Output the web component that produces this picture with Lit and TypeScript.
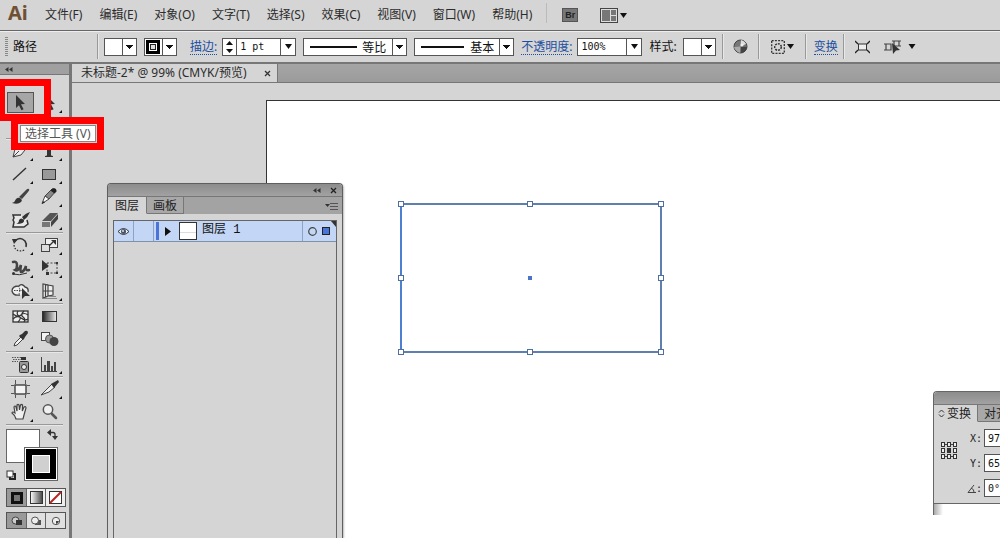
import { LitElement, html, svg, css, nothing } from "lit";
import { customElement, property } from "lit/decorators.js";

type Tool = { name: string; art: unknown; fly?: boolean; active?: boolean };

const MENUS = ["文件(F)", "编辑(E)", "对象(O)", "文字(T)", "选择(S)", "效果(C)", "视图(V)", "窗口(W)", "帮助(H)"];

const GROUPS: Tool[][] = [
  [
    { name: "选择工具", active: true, art: svg`<path fill="#333" d="M10 3l9 9-4 .3 2.600 5-2.200 1-2.400-5L10 16z"/>` },
    { name: "直接选择工具", fly: true, art: svg`<path fill="#333" d="M11 3l9 9-4 .3 2.600 5-2.200 1-2.400-5L11 16z"/>` },
    { name: "魔棒工具", art: svg`<path stroke="#333" stroke-width="2" d="M8 18l8-8"/><path stroke="#444" d="M18 3v4M16 5h4"/>` },
    { name: "套索工具", fly: true, art: svg`<path stroke="#333" stroke-width="1.500" fill="none" stroke-dasharray="2 1" d="M10 14q-3-9 5-9 8 1 5 6-4 4-9 1"/>` },
  ],
  [
    { name: "钢笔工具", fly: true, art: svg`<path fill="#ececec" stroke="#444" d="M7 17l2-8 5-4 5 5-4 5z"/><path stroke="#444" d="M7 17l6-6"/><path fill="#333" d="M15 3l5 5-2 2-5-5z"/>` },
    { name: "文字工具", fly: true, art: svg`<path fill="#333" d="M8 4h12v4h-1q0-2-3-2v9q0 1 2 1v1h-8v-1q2 0 2-1V6q-3 0-3 2H8z"/>` },
    { name: "直线段工具", fly: true, art: svg`<path stroke="#333" stroke-width="1.400" d="M7 17L20 5"/>` },
    { name: "矩形工具", fly: true, art: svg`<rect x="7.500" y="6.500" width="13" height="10" fill="#999" stroke="#333"/>` },
    { name: "画笔工具", art: svg`<path fill="#444" d="M23 3q1 1-1 3l-6 7-3-2 7-7q2-2 3-1z"/><path fill="#333" d="M6 17q3-1 4-4 2-2 4-1 3 2 1 4-3 3-9 1z"/>` },
    { name: "铅笔工具", fly: true, art: svg`<path fill="#888" stroke="#444" d="M10 10l7-7q3-1 4 2l-7 8z"/><path fill="#fff" stroke="#444" d="M10 10l4 3-7 4.500z"/><path fill="#222" d="M15.500 4.500l2-2q4-1 4 3l-2 2zM7 18l1-3 2 1.500z"/>` },
    { name: "斑点画笔工具", art: svg`<path fill="#e8e8e8" stroke="#333" stroke-width="1.500" d="M15 6H7l1 3-1 2 1 2-1 5h11l4-3-1-4"/><path fill="#333" d="M24 3q-4 1-8 5l2 3q4-3 6-8zM10 15q3-1 3-4 2-3 5 0 1 4-8 4z"/>` },
    { name: "橡皮擦工具", fly: true, art: svg`<path fill="#555" d="M7 12l8-8h8l-7 8z"/><path fill="#777" d="M7 13h8v5H7z"/><path fill="#444" d="M16 13l7-8v5l-7 8z"/>` },
  ],
  [
    { name: "旋转工具", fly: true, art: svg`<path fill="none" stroke="#333" stroke-width="1.600" d="M9 7q5-5 10 0 2 3 1 6"/><path fill="#333" d="M6 5l6 0-4 5z"/><path fill="none" stroke="#333" stroke-width="1.300" stroke-dasharray="1.500 1.500" d="M8 11q1 8 11 5"/>` },
    { name: "比例缩放工具", fly: true, art: svg`<rect x="10.500" y="4.500" width="12" height="9" fill="#eee" stroke="#444"/><rect x="6.500" y="10.500" width="8" height="7" fill="#ddd" stroke="#444"/><path stroke="#333" stroke-width="1.300" d="M14 12l4-4"/><path fill="#333" d="M16 6h5v5z"/>` },
    { name: "宽度工具", fly: true, art: svg`<path fill="none" stroke="#444" stroke-width="2.500" stroke-linecap="round" d="M7 5q4-1 4 3t-2 5q3 2 6-5-1 6 0 7 3 0 5-6-1 5 3 4"/><path fill="none" stroke="#333" d="M7 17q6 2 14-1"/><circle cx="7.500" cy="16.500" r="1.500" fill="#333"/>` },
    { name: "自由变换工具", fly: true, art: svg`<rect x="12" y="6" width="10" height="10" fill="none" stroke="#444" stroke-dasharray="2 1.500"/><path fill="#333" d="M7 3l7 6-7 5zM11 15h3v3h-3zM21 15h2v2h-2zM21 5h2v2h-2z"/>` },
    { name: "形状生成器工具", fly: true, art: svg`<path fill="#eee" stroke="#444" stroke-width="1.300" d="M14 15q-7 1-8-4 0-5 7-5 3-3 6 1 4 1 3 5"/><path stroke="#444" stroke-dasharray="1.500 1" d="M8 10.500h10M12 6q3 3 1 8"/><path fill="#333" d="M16 8l8 8-5 0-3 3z"/>` },
    { name: "透视网格工具", fly: true, art: svg`<path fill="#eee" stroke="#444" stroke-width="1.200" d="M8 4v14l5-2V5zM13 5l5 1v9l-5 1zM8 11h10M10.500 4v13M18 7v8"/><path stroke="#888" d="M9 18.500h13M14 16.500h7"/>` },
  ],
  [
    { name: "网格工具", art: svg`<rect x="7" y="6" width="15" height="11" fill="#eee" stroke="#333" stroke-width="1.300"/><path fill="none" stroke="#333" stroke-width="1.200" d="M7 9q5 4 8 1t7 0M7 14q4-4 8-1t7 1M12 6q-2 3 1 5t-1 6M18 6q-4 4-1 6t1 5"/>` },
    { name: "渐变工具", art: svg`<defs><linearGradient id="g"><stop stop-color="#222"/><stop offset="1" stop-color="#eee"/></linearGradient></defs><rect x="7.500" y="6.500" width="14" height="10" fill="url(#g)" stroke="#333"/>` },
    { name: "吸管工具", fly: true, art: svg`<path fill="#f4f4f4" stroke="#444" d="M8 18l1-3 6-6 2 2-6 6z"/><path fill="#333" d="M14 7l2-1 3-3q3-1 3 2l-3 4-1 2-1 1-4-4z"/>` },
    { name: "混合工具", art: svg`<rect x="6.500" y="4.500" width="8" height="8" fill="#f4f4f4" stroke="#444"/><circle cx="14.500" cy="11" r="4" fill="#999" stroke="#555"/><circle cx="19" cy="13.500" r="4.500" fill="#444"/>` },
  ],
  [
    { name: "符号喷枪工具", fly: true, art: svg`<rect x="13.500" y="8.500" width="9" height="11" rx="1" fill="#999" stroke="#333"/><path fill="#333" d="M15 4h5v3h-5z"/><circle cx="18" cy="14" r="2.500" fill="#eee" stroke="#333"/><path stroke="#555" stroke-dasharray="1.500 1" d="M6 4.500h9M7 6.500h8M6 8.500h6"/>` },
    { name: "柱形图工具", fly: true, art: svg`<path fill="#444" d="M6 4h1v15H6zM6 18h16v1H6zM9 12h2v6H9zM12 8h3v10h-3zM16 13h2v5h-2zM19 9h2v9h-2z"/>` },
  ],
  [
    { name: "画板工具", art: svg`<rect x="9" y="7" width="11" height="9" fill="#f4f4f4" stroke="#333" stroke-width="1.300"/><path stroke="#555" d="M9.500 2v4M19.500 2v4M9.500 17v3M19.500 17v3M5 7.500h3M21 7.500h3M5 15.500h3M21 15.500h3"/>` },
    { name: "切片工具", fly: true, art: svg`<path fill="#eee" stroke="#444" d="M6 17L17 6l3 3-6 5z"/><path fill="#333" d="M16 6l7-4 1 2-5 6z"/>` },
    { name: "抓手工具", fly: true, art: svg`<path fill="#f0f0f0" stroke="#444" stroke-width="1.200" d="M10 18q-1-4-4-6 0-2 3 0L8 6q1-2 2 0l1 4V4q1-1 2 0l.5 5 1-5q1-1 2 0l-.2 6 1.700-4q2-1 2 1l-2 7-1 4z"/>` },
    { name: "缩放工具", art: svg`<circle cx="13" cy="8.500" r="4.700" fill="#f0f0f0" stroke="#555" stroke-width="1.500"/><path stroke="#555" stroke-width="2.500" stroke-linecap="round" d="M17 13l4 4"/>` },
  ],
];

const arrow = (w = 7) => html`<svg width=${w} height="5" viewBox="0 0 7 5" aria-hidden="true"><path fill="#111" d="M0 0h7L3.500 5z"/></svg>`;
const collapse = () => html`<svg width="8" height="5" viewBox="0 0 8 5" aria-hidden="true"><path fill="#333" d="M3.500 0v5L0 2.500zM7.500 0v5L4 2.500z"/></svg>`;

const base = css`
  *, *::before, *::after { box-sizing: border-box; }
  button { font: inherit; color: inherit; background: none; border: 0; padding: 0; margin: 0; display: flex; align-items: center; justify-content: center; flex: none; }
  svg { display: block; flex: none; }
  input { font: 10px "DejaVu Sans Mono", monospace; color: #111; border: 1px solid #555; background: #fff; margin: 0; padding: 0 3px; height: 18px; border-radius: 0; min-width: 0; }
`;

@customElement("menu-bar")
class MenuBar extends LitElement {
  static styles = [base, css`
    :host { display: flex; align-items: center; height: 30px; background: #d5d5d5; padding-left: 8px; }
    .logo { font: bold 20px/24px "Noto Sans", sans-serif; color: #705033; width: 37px; padding-bottom: 4px; }
    nav { display: flex; gap: 17px; }
    .item { font-size: 12px; line-height: 18px; white-space: nowrap; }
    .rule { width: 1px; height: 20px; background: #bbb; margin: 0 15px 4px 14px; }
    .bridge { width: 16px; height: 14px; background: #777; border: 1px solid #555; color: #222; font: bold 9px "Liberation Sans", sans-serif; }
    .arrange { gap: 2px; margin-left: 22px; }
  `];
  render() {
    return html`
      <div class="logo">Ai</div>
      <nav>${MENUS.map((m) => html`<button class="item">${m}</button>`)}</nav>
      <div class="rule"></div>
      <button class="bridge" aria-label="Bridge">Br</button>
      <button class="arrange" aria-label="排列文档">
        <svg width="18" height="15" viewBox="0 0 18 15"><rect x=".5" y=".5" width="17" height="14" fill="#ddd" stroke="#444"/><path fill="#777" d="M2 2h8v11H2zM11 2h5v5h-5zM11 8h5v5h-5z"/></svg>
        ${arrow()}
      </button>`;
  }
}

@customElement("control-bar")
class ControlBar extends LitElement {
  static styles = [base, css`
    :host { display: flex; align-items: center; height: 32px; background: #d5d5d5; border-top: 1px solid #666; box-shadow: inset 0 1px #eee; padding-left: 5px; font-size: 12px; line-height: 18px; white-space: nowrap; color: #111; }
    .grip { width: 3px; height: 19px; background: repeating-linear-gradient(#888 0 1px, transparent 1px 2px); margin-right: 5px; }
    .kind { width: 84px; }
    .rule { width: 1px; height: 25px; background: #999; box-shadow: 1px 0 #e8e8e8; }
    select { appearance: none; font: 12px/16px "Noto Sans CJK SC", sans-serif; color: #111; height: 18px; border: 1px solid #555; border-radius: 0; margin: 0; padding: 0; width: 33px; flex: none; background: #fff; }
    .pick { position: relative; display: flex; margin-left: 7px; flex: none; }
    .pick::after { content: ""; width: 14px; height: 16px; position: absolute; right: 1px; top: 1px; border-left: 1px solid #555; pointer-events: none; background: linear-gradient(to bottom left, #111 50%, transparent 50%) 3px 6px / 4px 5px no-repeat, linear-gradient(to bottom right, #111 50%, transparent 50%) 6px 6px / 4px 5px no-repeat; }
    .first { margin-left: 6px; }
    .ring::before { content: ""; position: absolute; left: 2px; top: 2px; width: 14px; height: 14px; border: 3px solid #000; background: #ddd; box-shadow: inset 0 0 0 1px #fff, inset 0 0 0 2px #222; pointer-events: none; }
    .line::before { content: ""; position: absolute; left: 7px; top: 8px; height: 2px; width: 47px; background: #111; pointer-events: none; }
    .profile select { width: 104px; padding-left: 58px; }
    .brush select { width: 100px; padding-left: 55px; }
    .brush::before { width: 43px; }
    a { color: #1c4fa0; text-decoration: none; border-bottom: 1px dotted #1c4fa0; line-height: 15px; }
    .combo { display: flex; height: 18px; flex: none; }
    .combo button { width: 15px; border: 1px solid #555; border-left: 0; background: #fff; }
    .stroke { margin-left: 5px; }
    .stroke .spin { border-left: 1px solid #555; }
    .stroke input { width: 44px; border-left: 0; }
    .opacity { margin-left: 5px; }
    .opacity input { width: 50px; }
    .gap13 { margin-left: 13px; }
    .gap7 { margin-left: 7px; }
    .tail { margin-left: 6px; }
    .icon { gap: 2px; }
    .globe { margin: 0 10px; }
    .isolate { margin: 0 11px 0 12px; }
    .trans { margin: 0 5px 0 8px; }
    .fit { margin-left: 11px; }
    .similar { margin-left: 14px; gap: 7px; }
  `];
  render() {
    return html`
      <div class="grip"></div>
      <div class="kind">路径</div>
      <div class="rule"></div>
      <div class="pick first"><select aria-label="填色"><option></option></select></div>
      <div class="pick ring"><select aria-label="描边颜色"><option></option></select></div>
      <a class="gap13" href="#stroke">描边:</a>
      <div class="combo stroke">
        <button class="spin" aria-label="调整描边粗细"><svg width="7" height="14" viewBox="0 0 7 14"><path fill="#111" d="M0 5h7L3.500 1zM0 9h7l-3.500 4z"/></svg></button>
        <input aria-label="描边粗细" value="1 pt" /><button aria-label="描边粗细选项">${arrow()}</button>
      </div>
      <div class="pick line profile"><select aria-label="变量宽度配置文件"><option>等比</option></select></div>
      <div class="pick line brush"><select aria-label="画笔定义"><option>基本</option></select></div>
      <a class="gap7" href="#opacity">不透明度:</a>
      <div class="combo opacity"><input aria-label="不透明度" value="100%" /><button aria-label="不透明度选项">${arrow()}</button></div>
      <label class="gap7" for="style">样式:</label>
      <div class="pick first"><select id="style"><option></option></select></div>
      <div class="rule tail"></div>
      <button class="globe" aria-label="重新着色图稿"><svg width="15" height="15" viewBox="0 0 15 15"><circle cx="7.500" cy="7.500" r="6.500" fill="#777" stroke="#444"/><path fill="#444" d="M7.500 7.500L14 8q-1 5-6 6z"/><path fill="#aaa" d="M7.500 7.500L1 8q1 4 6 6z"/><path fill="#ddd" d="M7.500 7.500L8 1q4 1 5 4z"/><circle cx="9" cy="6" r="1.500" fill="#eee"/></svg></button>
      <div class="rule"></div>
      <button class="icon isolate" aria-label="隔离选中的对象"><svg width="14" height="14" viewBox="0 0 14 14"><rect x=".7" y=".7" width="12.600" height="12.600" fill="none" stroke="#333" stroke-width="1.300" stroke-dasharray="2 1.200"/><circle cx="7" cy="7" r="3.300" fill="none" stroke="#333" stroke-width="1.500" stroke-dasharray="2 1"/></svg>${arrow()}</button>
      <div class="rule"></div>
      <a class="trans" href="#transform">变换</a>
      <div class="rule"></div>
      <button class="fit" aria-label="隔离"><svg width="15" height="14" viewBox="0 0 15 14"><rect x="3.500" y="4" width="8" height="6" fill="#eee" stroke="#333"/><path stroke="#222" stroke-width="1.300" d="M0 1l3 3M15 1l-3 3M0 13l3-3M15 13l-3-3"/></svg></button>
      <button class="similar" aria-label="选择类似的对象"><svg width="17" height="14" viewBox="0 0 17 14"><path fill="none" stroke="#444" stroke-width="1.200" d="M2 4h5v6H2zM0 4h2M0 10h2M10 1h5v5h-5zM8 1h2M15 1h2M15 6h2"/><path fill="#333" d="M8 3l8 7-4 .5L9 14z"/></svg>${arrow(8)}</button>`;
  }
}

@customElement("tool-button")
class ToolButton extends LitElement {
  @property({ attribute: false }) tool!: Tool;
  static styles = [base, css`
    :host { display: block; }
    button { width: 29px; height: 23px; position: relative; }
    svg { position: relative; }
    .on::before { content: ""; position: absolute; left: 1px; top: 0; width: 27px; height: 21px; background: #a6a6a6; border: 1px solid #555; }
  `];
  render() {
    const t = this.tool;
    return html`<button class=${t.active ? "on" : ""} aria-label=${t.name}>
      <svg width="29" height="23" viewBox="0 0 29 23" fill="none">${t.art}${t.fly ? svg`<path fill="#111" d="M27 18v3h-3z"/>` : nothing}</svg>
    </button>`;
  }
}

@customElement("tool-panel")
class ToolPanel extends LitElement {
  static styles = [base, css`
    :host { display: flex; flex-direction: column; width: 72px; flex: none; background: #d5d5d5; border-right: 3px solid #777; }
    .head { height: 11px; background: #a0a0a0; border-bottom: 1px solid #777; padding: 3px 5px; }
    .tools { padding: 17px 6px 0; }
    .group { display: grid; grid-template-columns: 29px 29px; }
    .group + .group, .paint { border-top: 1px solid #999; box-shadow: inset 0 1px #e8e8e8; padding-top: 1px; }
    .paint { margin: 0 6px; padding-top: 4px; display: grid; grid-template-columns: 18px 16px 18px; grid-template-rows: 18px 16px 18px; }
    .fill { grid-area: 1 / 1 / 3 / 3; background: #fff; border: 1px solid #666; }
    .stroke { grid-area: 2 / 2 / 4 / 4; background: #000; border: 1px solid #666; box-shadow: inset 0 0 0 1px #fff; padding: 7px; }
    .hole { width: 100%; height: 100%; border: 1px solid #fff; background: #d0d0d0; }
    .swap { grid-area: 1 / 3; justify-content: end; align-items: start; }
    .reset { grid-area: 3 / 1; justify-content: start; align-items: end; }
    .modes { display: grid; grid-template-columns: 20px 19px 19px; margin: 7px 5px 0 6px; width: 60px; border: 1px solid #555; }
    .modes button { height: 17px; width: auto; border-right: 1px solid #666; background: #eee; }
    .modes button:last-child { border-right: 0; }
    .modes .on { background: #999; }
    .modes.draw { margin-top: 5px; }
    .draw button { height: 15px; background: #e0e0e0; }
  `];
  render() {
    return html`
      <div class="head">${collapse()}</div>
      <div class="tools">
        ${GROUPS.map((g) => html`<div class="group">${g.map((t) => html`<tool-button .tool=${t}></tool-button>`)}</div>`)}
      </div>
      <div class="paint">
        <button class="fill" aria-label="填色"></button>
        <button class="stroke" aria-label="描边"><span class="hole"></span></button>
        <button class="swap" aria-label="互换填色和描边"><svg width="11" height="11" viewBox="0 0 11 11"><path fill="none" stroke="#333" stroke-width="1.300" d="M2 3.500h4q2 0 2 2V8"/><path fill="#333" d="M4 0v7L0 3.500zM5 7h6l-3 4z"/></svg></button>
        <button class="reset" aria-label="默认填色和描边"><svg width="11" height="11" viewBox="0 0 11 11"><rect x="4" y="4" width="5" height="5" fill="#fff" stroke="#222" stroke-width="2"/><rect x="1" y="1" width="6" height="6" fill="#fff" stroke="#333"/></svg></button>
      </div>
      <div class="modes">
        <button class="on" aria-label="颜色"><svg width="12" height="12" viewBox="0 0 12 12"><path fill="#111" d="M0 0h12v12H0z"/><path fill="#777" d="M3 3h6v6H3z"/></svg></button>
        <button aria-label="渐变"><svg width="13" height="13" viewBox="0 0 13 13"><defs><linearGradient id="m"><stop stop-color="#fff"/><stop offset="1" stop-color="#444"/></linearGradient></defs><rect x=".5" y=".5" width="12" height="12" fill="url(#m)" stroke="#333"/></svg></button>
        <button aria-label="无"><svg width="13" height="13" viewBox="0 0 13 13"><rect x=".5" y=".5" width="12" height="12" fill="#fff" stroke="#333"/><path stroke="#b22" stroke-width="2" d="M1 12L12 1"/></svg></button>
      </div>
      <div class="modes draw">
        <button class="on" aria-label="正常绘图"><svg width="12" height="10" viewBox="0 0 12 10"><circle cx="4.500" cy="4.500" r="3.500" fill="#ccc" stroke="#444"/><path fill="#333" d="M5 4h6v5H5z"/></svg></button>
        <button aria-label="背面绘图"><svg width="12" height="10" viewBox="0 0 12 10"><path fill="#555" d="M5 4h6v5H5z"/><circle cx="5" cy="4.500" r="3.500" fill="#eee" stroke="#555"/></svg></button>
        <button aria-label="内部绘图"><svg width="10" height="10" viewBox="0 0 10 10"><circle cx="5" cy="5" r="3.700" fill="#eee" stroke="#555"/><path fill="#444" d="M5 5h3l-1 2-2 1z"/></svg></button>
      </div>`;
  }
}

const panelStyles = css`
  .bar { height: 13px; background: linear-gradient(#8c8c8c, #a2a2a2); border-bottom: 1px solid #777; display: flex; align-items: center; justify-content: end; gap: 9px; padding-right: 5px; }
  .tabs { display: flex; height: 17px; background: #a3a3a3; font-size: 12px; line-height: 17px; color: #222; }
  .tab { padding: 0 6px; border-right: 1px solid #777; border-bottom: 1px solid #777; background: #a8a8a8; white-space: nowrap; }
  .front { background: #d5d5d5; border-bottom-color: #d5d5d5; }
`;

@customElement("layers-panel")
class LayersPanel extends LitElement {
  static styles = [base, panelStyles, css`
    :host { display: flex; flex-direction: column; background: #d5d5d5; border: 1px solid #5f5f5f; border-bottom: 0; border-radius: 4px 4px 0 0; overflow: hidden; box-shadow: 1px 1px 2px #0004; }
    .front { padding: 0 7px; }
    .more { margin-left: auto; padding-right: 4px; }
    .list { flex: 1; margin: 6px 5px 0; border: 1px solid #666; border-bottom: 0; }
    .row { display: flex; align-items: stretch; height: 21px; background: #c3d6f5; border-bottom: 1px solid #8190ab; position: relative; font: 12px "Liberation Mono", "Noto Sans CJK SC", monospace; color: #111; }
    .eye { width: 20px; border-right: 1px solid #8da2c7; }
    .lock { width: 20px; border-right: 1px solid #8da2c7; }
    .color { width: 3px; background: #4a74d8; margin: 1px 6px 1px 2px; }
    .thumb { width: 18px; height: 18px; border: 1px solid #333; background: linear-gradient(#fff 9px, #ddd 9px 10px, #fff 10px); margin: 1px 5px 0 8px; }
    .name { line-height: 19px; flex: 1; }
    .marks { width: 34px; border-left: 1px solid #8da2c7; display: flex; align-items: center; gap: 5px; padding-left: 5px; }
    .sel { width: 8px; height: 8px; background: #4a74d8; border: 1px solid #222; }
    .corner { position: absolute; right: 0; top: 0; }
  `];
  render() {
    return html`
      <div class="bar">
        <button aria-label="折叠">${collapse()}</button>
        <button aria-label="关闭"><svg width="7" height="7" viewBox="0 0 7 7"><path stroke="#222" stroke-width="1.300" d="M1 1l5 5M6 1L1 6"/></svg></button>
      </div>
      <div class="tabs">
        <button class="tab front">图层</button><button class="tab">画板</button>
        <button class="more" aria-label="面板菜单"><svg width="13" height="8" viewBox="0 0 13 8"><path fill="#333" d="M0 2h5L2.500 5z"/><path stroke="#555" d="M5 1.500h8M5 4.500h8M5 7.500h8"/></svg></button>
      </div>
      <div class="list">
        <div class="row">
          <button class="eye" aria-label="切换可视性"><svg width="13" height="9" viewBox="0 0 13 9"><path fill="#e8eefa" stroke="#333" d="M1 4.500q5.500-6 11 0-5.500 6-11 0z"/><circle cx="6.500" cy="4.500" r="2.500" fill="#456"/><circle cx="6" cy="4" r="1" fill="#dde"/></svg></button>
          <div class="lock"></div>
          <div class="color"></div>
          <button aria-label="展开"><svg width="6" height="9" viewBox="0 0 6 9"><path fill="#111" d="M0 0v9l6-4.500z"/></svg></button>
          <div class="thumb"></div>
          <div class="name">图层 1</div>
          <div class="marks"><svg width="9" height="9" viewBox="0 0 9 9"><circle cx="4.500" cy="4.500" r="3.800" fill="none" stroke="#444" stroke-width="1.200"/></svg><div class="sel"></div></div>
          <svg class="corner" width="5" height="6" viewBox="0 0 5 6"><path fill="#333" d="M0 0h5v6z"/></svg>
        </div>
      </div>`;
  }
}

@customElement("transform-panel")
class TransformPanel extends LitElement {
  static styles = [base, panelStyles, css`
    :host { display: block; background: linear-gradient(to right, #aaa, #fff) no-repeat left bottom / 9px 20px; border-left: 1px solid #666; border-top: 1px solid #666; border-radius: 4px 0 0 0; overflow: hidden; padding-bottom: 11px; }
    .tab { gap: 2px; }
    .front { padding: 0 6px 0 4px; }
    .body { background: #d5d5d5; border-bottom: 1px solid #666; display: flex; height: 82px; padding-top: 7px; }
    .ref { width: 28px; margin-top: 12px; padding-left: 6px; flex: none; }
    .fields { display: flex; flex-direction: column; gap: 7px; }
    .field { display: grid; grid-template-columns: 20px 54px; align-items: center; gap: 2px; font: 10px "DejaVu Sans Mono", monospace; color: #222; }
    .cap { justify-self: end; display: flex; align-items: center; }
  `];
  render() {
    const cells = [0, 6, 12];
    return html`
      <div class="bar"></div>
      <div class="tabs">
        <button class="tab front"><svg width="7" height="9" viewBox="0 0 7 9"><path fill="none" stroke="#333" d="M1 3.500L3.500 1 6 3.500M1 5.500L3.500 8 6 5.500"/></svg>变换</button>
        <button class="tab">对齐</button>
      </div>
      <div class="body">
        <div class="ref"><svg width="18" height="19" viewBox="0 0 18 19">
          ${cells.map((y) => cells.map((x) => svg`<rect x=${x + 1.5} y=${y + 1.5} width="3" height="4" fill=${x === 6 && y === 6 ? "#333" : "#eee"} stroke="#333"/>`))}
          <path stroke="#444" d="M5 3.500h2M11 3.500h2M5 15.500h2M11 15.500h2"/></svg></div>
        <div class="fields">
          <label class="field"><span class="cap">X:</span><input value="97.5 mm" /></label>
          <label class="field"><span class="cap">Y:</span><input value="65.4 mm" /></label>
          <label class="field"><span class="cap"><svg width="9" height="9" viewBox="0 0 9 9"><path fill="none" stroke="#444" d="M9 8.500H1L7 1M4 4q3 1 3 4"/></svg>:</span><input aria-label="旋转" value="0°" /></label>
        </div>
      </div>`;
  }
}

@customElement("app-root")
class AppRoot extends LitElement {
  static styles = [base, css`
    :host { display: flex; flex-direction: column; height: 100vh; position: relative; overflow: hidden; background: #d5d5d5; color: #2c2c2c; font-family: "Noto Sans", "Noto Sans CJK SC", sans-serif; font-size: 12px; }
    .work { flex: 1; min-height: 0; display: flex; border-top: 2px solid #777; }
    .doc { flex: 1; min-width: 0; display: flex; flex-direction: column; }
    .docs { height: 19px; background: linear-gradient(#a5a5a5, #9b9b9b); border-bottom: 1px solid #777; display: flex; }
    .docs .tab { background: #d5d5d5; border-right: 1px solid #777; padding: 0 6px 0 9px; gap: 17px; line-height: 18px; white-space: nowrap; }
    .canvas { flex: 1; display: flex; padding: 17px 0 0 194px; }
    .artboard { flex: 1; background: #fff; border: solid #333; border-width: 1px 0 0 1px; position: relative; }
    .shape { position: absolute; left: 130px; top: 99px; }
    layers-panel { position: absolute; left: 107px; top: 183px; bottom: 0; width: 236px; }
    transform-panel { position: absolute; left: 933px; top: 391px; right: 0; }
    .mark { position: absolute; border: 7px solid #f00; }
    .m1 { left: -2px; top: 79px; width: 53px; height: 42px; }
    .m2 { left: 11px; top: 117px; width: 93px; height: 33px; background: #d5d5d5; padding: 1px 1px 1px 2px; }
    .tip { background: #fff; border: 1px solid #888; height: 17px; line-height: 15px; font-size: 12px; padding-left: 4px; color: #555; white-space: nowrap; }
  `];
  render() {
    const handles = [[3, 3], [132, 3], [263, 3], [3, 77], [263, 77], [3, 151], [132, 151], [263, 151]];
    return html`
      <menu-bar></menu-bar>
      <control-bar></control-bar>
      <div class="work">
        <tool-panel></tool-panel>
        <div class="doc">
          <div class="docs"><button class="tab"><span>未标题-2* @ 99% (CMYK/预览)</span><svg width="7" height="7" viewBox="0 0 7 7"><path stroke="#333" stroke-width="1.300" d="M1 1l5 5M6 1L1 6"/></svg></button></div>
          <div class="canvas"><div class="artboard">
            <svg class="shape" width="267" height="155" viewBox="0 0 267 155">
              <rect x="4" y="4" width="260" height="148" fill="none" stroke="#5f7fae" stroke-width="2"/>
              <path stroke="#4f7fd0" stroke-width="2" d="M4 4v148"/>
              ${handles.map(([x, y]) => svg`<rect x=${x - 1.5} y=${y - 1.5} width="5" height="5" fill="#fff" stroke="#4f6f9e"/>`)}
              <path fill="#4a74c8" d="M131 76h4v4h-4z"/>
            </svg>
          </div></div>
        </div>
      </div>
      <layers-panel></layers-panel>
      <transform-panel></transform-panel>
      <div class="mark m1"></div>
      <div class="mark m2"><div class="tip">选择工具 (V)</div></div>`;
  }
}
